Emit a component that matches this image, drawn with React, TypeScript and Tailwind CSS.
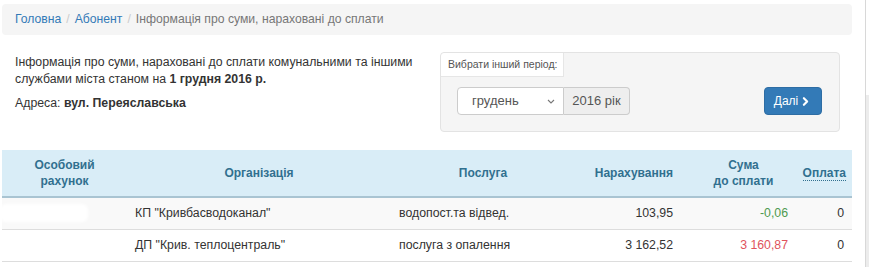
import { ChevronRight } from "lucide-react"

const rows = [
  {
    account: true,
    org: 'КП "Кривбасводоканал"',
    service: "водопост.та відвед.",
    accrued: "103,95",
    due: "-0,06",
    dueColor: "text-[#4f9a4f]",
    paid: "0",
  },
  {
    account: false,
    org: 'ДП "Крив. теплоцентраль"',
    service: "послуга з опалення",
    accrued: "3 162,52",
    due: "3 160,87",
    dueColor: "text-[#e0535c]",
    paid: "0",
  },
]

const App = () => {
  return (
    <div className="flex h-[267px] w-[869px] overflow-hidden bg-white font-['Liberation_Sans',Arial,sans-serif] text-[13px] text-[#333]">
      <div className="ml-[2px] w-[850px]">
        {/* breadcrumb */}
        <div className="mt-[4px] flex h-[31px] items-center rounded-[4px] bg-[#f5f5f5] px-[13px] text-[12.2px]">
          <span className="text-[#337ab7]">Головна</span>
          <span className="px-[5px] text-[#ccc]">/</span>
          <span className="text-[#337ab7]">Абонент</span>
          <span className="px-[5px] text-[#ccc]">/</span>
          <span className="text-[#777]">Інформація про суми, нараховані до сплати</span>
        </div>

        <div className="mt-[17px] flex">
          <div className="w-[438px] pl-[13px] pt-[2px] text-[12.3px] leading-[17px]">
            <p className="w-[405px]">
              Інформація про суми, нараховані до сплати комунальними та іншими службами міста станом на{" "}
              <b>1 грудня 2016 р.</b>
            </p>
            <p className="mt-[7px]">
              Адреса: <b>вул. Переяславська</b>
            </p>
          </div>

          <div className="h-[80px] w-[400px] rounded-[4px] border border-[#e3e3e3] bg-[#f5f5f5]">
            <div className="flex h-[24px] w-[123px] items-center rounded-tl-[4px] border-b border-r border-[#e6e6e6] bg-white pl-[7px] text-[10.5px] text-[#555]">
              Вибрати інший період:
            </div>
            <div className="mt-[10px] flex items-center pl-[16px] pr-[17px]">
              <div className="flex h-[28px] w-[107px] items-center justify-between rounded-l-[4px] border border-[#ccc] bg-white pl-[14px] pr-[8px] text-[13px] text-[#555]">
                <span>грудень</span>
                <svg width="8" height="5" viewBox="0 0 8 5" className="text-[#777]">
                  <path d="M1 1l3 3 3-3" fill="none" stroke="currentColor" strokeWidth="1.1" />
                </svg>
              </div>
              <div className="flex h-[28px] w-[66px] items-center justify-center rounded-r-[4px] border border-l-0 border-[#ccc] bg-[#eee] text-[13px] text-[#555]">
                2016 рік
              </div>
              <button className="ml-auto flex h-[28px] w-[58px] items-center justify-center rounded-[4px] border border-[#2e6da4] bg-[#337ab7] text-[12px] text-white">
                Далі
                <ChevronRight className="ml-[1px] h-[13px] w-[13px]" strokeWidth={4} />
              </button>
            </div>
          </div>
        </div>

        {/* table */}
        <table className="mt-[18px] w-[850px] table-fixed border-collapse">
          <colgroup>
            <col className="w-[125px]" />
            <col className="w-[264px]" />
            <col className="w-[184px]" />
            <col className="w-[106px]" />
            <col className="w-[115px]" />
            <col className="w-[56px]" />
          </colgroup>
          <thead>
            <tr className="h-[47px] border-b-2 border-[#a9c4d2] bg-[#d9edf7] text-[12px] font-bold leading-[16.5px] text-[#31708f]">
              <th className="px-[8px] text-center align-middle">
                Особовий
                <br />
                рахунок
              </th>
              <th className="px-[8px] text-center align-middle">Організація</th>
              <th className="px-[8px] text-center align-middle">Послуга</th>
              <th className="px-[8px] text-right align-middle">Нарахування</th>
              <th className="pl-[18px] pr-[8px] text-center align-middle">
                Сума
                <br />
                до сплати
              </th>
              <th className="pr-[6px] text-right align-middle">
                <span className="border-b border-dotted border-[#31708f]">Оплата</span>
              </th>
            </tr>
          </thead>
          <tbody className="text-[12.3px]">
            {rows.map((row, i) => (
              <tr
                key={row.org}
                className={`h-[32px] border-b border-[#ddd] ${i % 2 === 0 ? "bg-[#f9f9f9]" : "bg-white"}`}
              >
                <td className="align-middle">
                  {row.account && <div className="ml-[-2px] h-[18px] w-[88px] rounded-[6px] bg-white blur-[1.5px]" />}
                </td>
                <td className="px-[8px] align-middle">{row.org}</td>
                <td className="px-[8px] align-middle">{row.service}</td>
                <td className="px-[8px] text-right align-middle">{row.accrued}</td>
                <td className={`px-[8px] text-right align-middle ${row.dueColor}`}>{row.due}</td>
                <td className="px-[8px] text-right align-middle">{row.paid}</td>
              </tr>
            ))}
          </tbody>
        </table>
      </div>

      {/* scrollbar edge */}
      <div className="ml-auto flex w-[4px] flex-col border-l border-[#d8d8d8]">
        <div className="h-[95px]" />
        <div className="flex-1 bg-[#ececec]" />
      </div>
    </div>
  )
}

export default App
